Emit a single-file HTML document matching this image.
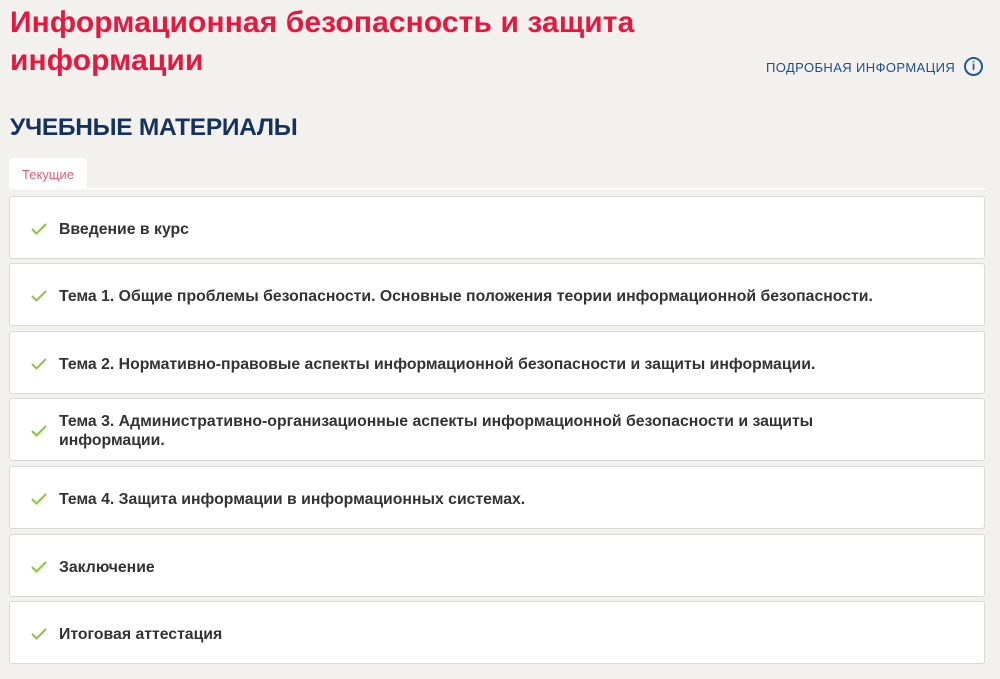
<!DOCTYPE html>
<html><head><meta charset="utf-8"><style>
body{margin:0;background:#f2f1ee;font-family:"Liberation Sans",sans-serif;width:1000px;height:679px;overflow:hidden;position:relative}
h1{position:absolute;left:10px;top:4px;margin:0;font-size:30px;line-height:38px;font-weight:bold;color:#e8173f;letter-spacing:0.1px}
.info{position:absolute;left:766px;top:60px;font-size:13px;color:#1e4f86;letter-spacing:0.4px}
.ic{position:absolute;left:964px;top:57px;width:19px;height:19px;border:2px solid #1e5a96;border-radius:50%;box-sizing:border-box;color:#1e5a96;font:bold 12px/15px "Liberation Sans",sans-serif;text-align:center}
h2{position:absolute;left:10px;top:114px;margin:0;font-size:24.5px;font-weight:bold;color:#15325e;letter-spacing:-0.3px}
.tab{position:absolute;left:9px;top:158px;width:78px;height:31px;background:#fff;border-radius:4px 4px 0 0;color:#ea5a73;font-size:13px;line-height:33px;text-align:center}
.line{position:absolute;left:9px;top:188px;width:976px;height:2px;background:#fbfbfa}
.card{position:absolute;left:9px;width:976px;height:63px;padding-top:3px;background:#fff;border:1px solid #d9d9d9;border-radius:3px;box-sizing:border-box;display:flex;align-items:center;font-size:15.8px;font-weight:bold;color:#333;line-height:19px}
.card svg{position:absolute;left:21px;top:26px}
.card span{margin-left:49px;width:820px}
</style></head><body>
<h1>Информационная безопасность и защита<br>информации</h1>
<div class="info">ПОДРОБНАЯ ИНФОРМАЦИЯ</div><div class="ic">i</div>
<h2>УЧЕБНЫЕ МАТЕРИАЛЫ</h2>
<div class="tab">Текущие</div><div class="line"></div>
<div class="card" style="top:196px"><svg width="16" height="12"><path d="M1 6l4.5 4.5L15 1" stroke="#8cc63f" stroke-width="2" fill="none"/></svg><span>Введение в курс</span></div>
<div class="card" style="top:263px"><svg width="16" height="12"><path d="M1 6l4.5 4.5L15 1" stroke="#8cc63f" stroke-width="2" fill="none"/></svg><span style="width:900px">Тема 1. Общие проблемы безопасности. Основные положения теории информационной безопасности.</span></div>
<div class="card" style="top:331px"><svg width="16" height="12"><path d="M1 6l4.5 4.5L15 1" stroke="#8cc63f" stroke-width="2" fill="none"/></svg><span style="width:900px">Тема 2. Нормативно-правовые аспекты информационной безопасности и защиты информации.</span></div>
<div class="card" style="top:398px"><svg width="16" height="12"><path d="M1 6l4.5 4.5L15 1" stroke="#8cc63f" stroke-width="2" fill="none"/></svg><span style="width:800px">Тема 3. Административно-организационные аспекты информационной безопасности и защиты информации.</span></div>
<div class="card" style="top:466px"><svg width="16" height="12"><path d="M1 6l4.5 4.5L15 1" stroke="#8cc63f" stroke-width="2" fill="none"/></svg><span>Тема 4. Защита информации в информационных системах.</span></div>
<div class="card" style="top:534px"><svg width="16" height="12"><path d="M1 6l4.5 4.5L15 1" stroke="#8cc63f" stroke-width="2" fill="none"/></svg><span>Заключение</span></div>
<div class="card" style="top:601px"><svg width="16" height="12"><path d="M1 6l4.5 4.5L15 1" stroke="#8cc63f" stroke-width="2" fill="none"/></svg><span>Итоговая аттестация</span></div>
</body></html>
